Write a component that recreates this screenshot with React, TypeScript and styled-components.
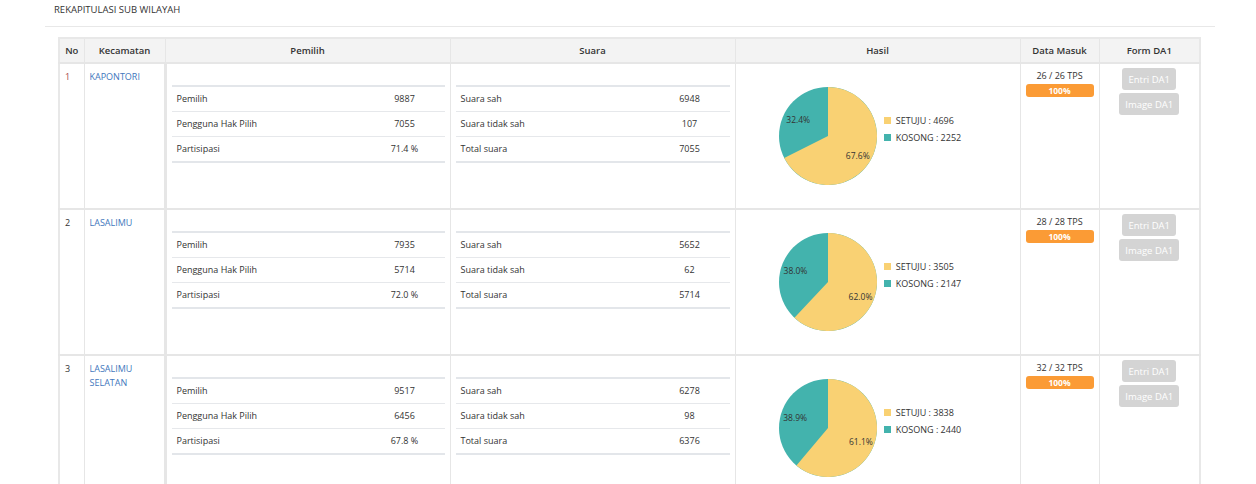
import React from "react";
import styled, { createGlobalStyle } from "styled-components";

const GlobalStyle = createGlobalStyle`
  body {
    margin: 0;
    background: #fff;
    font-family: "Open Sans", "Liberation Sans", sans-serif;
    color: #333;
  }
`;

const Page = styled.div`
  padding: 0 41px 0 45px;
`;

const Title = styled.div`
  font-size: 9.5px;
  line-height: 14px;
  padding: 3px 0 9px 9px;
  border-bottom: 1px solid #e8e8e8;
  color: #333;
`;

const Table = styled.table`
  margin: 10px 14px 0 13px;
  width: calc(100% - 27px);
  border-collapse: collapse;
  table-layout: fixed;
  font-size: 9px;
  border: 2px solid #e8e8e8;
`;

const Th = styled.th`
  background: #f3f3f3;
  border: 1px solid #e6e6e6;
  border-bottom-width: 2px;
  height: 23px;
  font-weight: 600;
  font-size: 9.5px;
  color: #333;
  text-align: center;
  padding: 0 4px;
`;

const Td = styled.td<{ $thick?: boolean }>`
  border: 1px solid #e6e6e6;
  border-top-width: 2px;
  border-right-width: ${(p) => (p.$thick ? "3px" : "1px")};
  vertical-align: top;
  height: 131px;
  padding: 6px 5px;
  line-height: 14px;
`;

const NoText = styled.span<{ $active?: boolean }>`
  color: ${(p) => (p.$active ? "#a94a4a" : "#333")};
`;

const DistrictLink = styled.a`
  color: #4277bd;
  text-decoration: none;
`;

const StatTable = styled.table`
  width: 100%;
  margin-top: 15px;
  border-collapse: collapse;
  border-top: 2px solid #e3e6ea;
  border-bottom: 2px solid #e3e6ea;
`;

const StatRow = styled.tr`
  & + & td {
    border-top: 1px solid #e6e8eb;
  }
`;

const StatLabel = styled.td`
  height: 24px;
  padding: 0 5px;
  color: #333;
`;

const StatValue = styled.td`
  width: 78px;
  text-align: center;
  color: #333;
`;

const ChartCell = styled.div`
  display: flex;
  align-items: center;
  justify-content: center;
  gap: 6px;
  height: 132px;
  margin-left: -16px;
`;

const Legend = styled.div`
  display: flex;
  flex-direction: column;
  gap: 3px;
  margin-bottom: 14px;
`;

const LegendItem = styled.div`
  display: flex;
  align-items: center;
  gap: 5px;
  font-size: 9px;
  line-height: 14px;
`;

const Swatch = styled.span<{ $color: string }>`
  width: 7px;
  height: 7px;
  background: ${(p) => p.$color};
`;

const Center = styled.div<{ $lift?: boolean }>`
  display: flex;
  flex-direction: column;
  align-items: center;
  margin-top: ${(p) => (p.$lift ? "-2px" : "0")};
`;

const TpsText = styled.div`
  line-height: 12px;
  margin-bottom: 2px;
`;

const ProgressBar = styled.div`
  width: 100%;
  height: 13px;
  border-radius: 3px;
  background: #fb9b35;
  color: #fff;
  font-size: 8.5px;
  font-weight: 700;
  line-height: 13px;
  text-align: center;
`;

const Button = styled.button`
  border: 0;
  border-radius: 3px;
  background: #d4d4d4;
  color: #fff;
  font-family: "Open Sans", "Liberation Sans", sans-serif;
  font-size: 9.5px;
  height: 22px;
  padding: 0 6px;
  margin-bottom: 3px;
`;

const YELLOW = "#f9d173";
const TEAL = "#43b3ad";

type Row = {
  no: number;
  name: string;
  pemilih: number;
  pengguna: number;
  partisipasi: string;
  sah: number;
  tidakSah: number;
  total: number;
  setuju: number;
  kosong: number;
  tps: number;
};

const rows: Row[] = [
  { no: 1, name: "KAPONTORI", pemilih: 9887, pengguna: 7055, partisipasi: "71.4 %", sah: 6948, tidakSah: 107, total: 7055, setuju: 4696, kosong: 2252, tps: 26 },
  { no: 2, name: "LASALIMU", pemilih: 7935, pengguna: 5714, partisipasi: "72.0 %", sah: 5652, tidakSah: 62, total: 5714, setuju: 3505, kosong: 2147, tps: 28 },
  { no: 3, name: "LASALIMU SELATAN", pemilih: 9517, pengguna: 6456, partisipasi: "67.8 %", sah: 6278, tidakSah: 98, total: 6376, setuju: 3838, kosong: 2440, tps: 32 },
];

// pie with the first slice running clockwise from 12 o'clock
const Pie = ({ a, b }: { a: number; b: number }) => {
  const r = 49;
  const c = 50;
  const share = a / (a + b);
  const angle = share * Math.PI * 2;
  const ex = c + r * Math.sin(angle);
  const ey = c - r * Math.cos(angle);
  const large = share > 0.5 ? 1 : 0;
  const label = (mid: number) => ({
    x: c + 35 * Math.sin(mid),
    y: c - 35 * Math.cos(mid),
  });
  const la = label(angle / 2);
  const lb = label(angle + (Math.PI * 2 - angle) / 2);
  const pct = (v: number) => ((v / (a + b)) * 100).toFixed(1) + "%";
  return (
    <svg width="100" height="100" viewBox="0 0 100 100">
      <circle cx={c} cy={c} r={r} fill={TEAL} />
      <path
        d={`M${c} ${c} L${c} ${c - r} A${r} ${r} 0 ${large} 1 ${ex} ${ey} Z`}
        fill={YELLOW}
      />
      <g fontSize="8.5" fill="#333" textAnchor="middle" fontFamily="Open Sans, sans-serif">
        <text x={la.x} y={la.y + 5}>{pct(a)}</text>
        <text x={lb.x} y={lb.y + 5}>{pct(b)}</text>
      </g>
    </svg>
  );
};

const Stats = ({ items }: { items: [string, string | number][] }) => (
  <StatTable>
    <tbody>
      {items.map(([k, v]) => (
        <StatRow key={k}>
          <StatLabel>{k}</StatLabel>
          <StatValue>{v}</StatValue>
        </StatRow>
      ))}
    </tbody>
  </StatTable>
);

export default function App() {
  return (
    <Page>
      <GlobalStyle />
      <Title>REKAPITULASI SUB WILAYAH</Title>
      <Table>
        <colgroup>
          <col style={{ width: 25 }} />
          <col style={{ width: 81 }} />
          <col style={{ width: 285 }} />
          <col style={{ width: 285 }} />
          <col style={{ width: 285 }} />
          <col style={{ width: 79 }} />
          <col />
        </colgroup>
        <thead>
          <tr>
            <Th>No</Th>
            <Th>Kecamatan</Th>
            <Th>Pemilih</Th>
            <Th>Suara</Th>
            <Th>Hasil</Th>
            <Th>Data Masuk</Th>
            <Th>Form DA1</Th>
          </tr>
        </thead>
        <tbody>
          {rows.map((r) => (
            <tr key={r.no}>
              <Td>
                <NoText $active={r.no === 1}>{r.no}</NoText>
              </Td>
              <Td $thick>
                <DistrictLink href="#">{r.name}</DistrictLink>
              </Td>
              <Td>
                <Stats
                  items={[
                    ["Pemilih", r.pemilih],
                    ["Pengguna Hak Pilih", r.pengguna],
                    ["Partisipasi", r.partisipasi],
                  ]}
                />
              </Td>
              <Td>
                <Stats
                  items={[
                    ["Suara sah", r.sah],
                    ["Suara tidak sah", r.tidakSah],
                    ["Total suara", r.total],
                  ]}
                />
              </Td>
              <Td>
                <ChartCell>
                  <Pie a={r.setuju} b={r.kosong} />
                  <Legend>
                    <LegendItem>
                      <Swatch $color={YELLOW} />
                      SETUJU : {r.setuju}
                    </LegendItem>
                    <LegendItem>
                      <Swatch $color={TEAL} />
                      KOSONG : {r.kosong}
                    </LegendItem>
                  </Legend>
                </ChartCell>
              </Td>
              <Td>
                <Center>
                  <TpsText>
                    {r.tps} / {r.tps} TPS
                  </TpsText>
                  <ProgressBar>100%</ProgressBar>
                </Center>
              </Td>
              <Td>
                <Center $lift>
                  <Button>Entri DA1</Button>
                  <Button>Image DA1</Button>
                </Center>
              </Td>
            </tr>
          ))}
        </tbody>
      </Table>
    </Page>
  );
}
